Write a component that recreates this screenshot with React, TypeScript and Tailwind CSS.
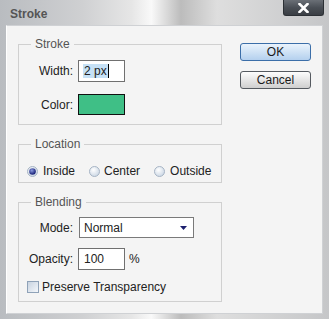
import React from "react";

const Radio = ({ checked }: { checked?: boolean }) => (
  <svg width="11" height="11" viewBox="0 0 11 11">
    <defs>
      <radialGradient id="rOff" cx="0.4" cy="0.35" r="0.7">
        <stop offset="0%" stopColor="#ffffff" />
        <stop offset="100%" stopColor="#c9d5e3" />
      </radialGradient>
      <radialGradient id="rOn" cx="0.4" cy="0.35" r="0.6">
        <stop offset="0%" stopColor="#8c9ce0" />
        <stop offset="100%" stopColor="#1a237a" />
      </radialGradient>
    </defs>
    <circle cx="5.5" cy="5.5" r="5" fill="url(#rOff)" stroke="#a7b4c4" strokeWidth="1" />
    {checked && <circle cx="5.5" cy="5.5" r="3.3" fill="url(#rOn)" />}
  </svg>
);

const Legend = ({ children }: { children: React.ReactNode }) => (
  <legend className="ml-[12px] px-[4px] leading-[14px] text-[#555]">{children}</legend>
);

export default function App() {
  return (
    <div className="w-[329px] h-[319px] flex flex-col font-['Liberation_Sans',Arial,sans-serif] text-[12px] text-[#222] bg-[linear-gradient(90deg,#b9bcc0_0%,#cfd0d2_25%,#e6e6e6_40%,#f9f9f9_46%,#bcbcbc_55%,#dedede_66%,#c5c6c8_100%)]">
      {/* title bar */}
      <div className="h-[25px] flex items-start justify-between">
        <div className="pl-[10px] pt-[6px] leading-[16px] font-bold text-[12px] text-[#555]">Stroke</div>
        <div className="mr-[5px] w-[41px] h-[16px] flex items-center justify-center rounded-b-[3px] border border-t-0 border-[#2c3035] bg-[linear-gradient(180deg,#6a6f76_0%,#4a4f56_50%,#3a3e44_100%)]">
          <svg width="11" height="10" viewBox="0 0 11 10">
            <path d="M1.5 1 L9.5 9 M9.5 1 L1.5 9" stroke="#ffffff" strokeWidth="2.6" strokeLinecap="square" />
          </svg>
        </div>
      </div>

      {/* client area */}
      <div className="ml-[6px] w-[317px] flex-1 mb-[5px] border border-[#cfd1d4] border-l-white bg-[#f4f4f4] flex items-start pt-[11px] pl-[11px]">
        <div className="w-[204px] flex flex-col gap-[12px]">
          <fieldset className="border border-[#d0d0d0] px-0 pb-[9px]">
            <Legend>Stroke</Legend>
            <div className="mt-[9px] flex items-center">
              <div className="w-[54px] text-right">Width:</div>
              <div className="ml-[5px] w-[47px] h-[22px] border border-[#707070] bg-white flex items-center pl-[4px]">
                <span className="bg-[#c6e1f6] px-[1px] leading-[14px]">2 px</span>
                <span className="w-px h-[14px] bg-black" />
              </div>
            </div>
            <div className="mt-[12px] flex items-center">
              <div className="w-[54px] text-right">Color:</div>
              <div className="ml-[5px] w-[47px] h-[21px] border border-[#111] bg-[#3fbf86]" />
            </div>
          </fieldset>

          <fieldset className="border border-[#d0d0d0] px-0 pb-[4px]">
            <Legend>Location</Legend>
            <div className="mt-[13px] pl-[8px] flex items-center gap-[14px] leading-[14px]">
              <label className="flex items-center gap-[5px]">
                <Radio checked />
                <span>Inside</span>
              </label>
              <label className="flex items-center gap-[4px]">
                <Radio />
                <span>Center</span>
              </label>
              <label className="flex items-center gap-[5px]">
                <Radio />
                <span>Outside</span>
              </label>
            </div>
          </fieldset>

          <fieldset className="border border-[#d0d0d0] px-0 pb-[7px]">
            <Legend>Blending</Legend>
            <div className="mt-[8px] flex items-center">
              <div className="w-[54px] text-right">Mode:</div>
              <div className="ml-[6px] w-[115px] h-[21px] border border-[#7a7a7a] bg-white flex items-center justify-between pl-[4px] pr-[6px]">
                <span>Normal</span>
                <svg width="7" height="4" viewBox="0 0 7 4">
                  <path d="M0 0 H7 L3.5 4 Z" fill="#1c1f6e" />
                </svg>
              </div>
            </div>
            <div className="mt-[10px] flex items-center">
              <div className="w-[54px] text-right">Opacity:</div>
              <div className="ml-[5px] w-[47px] h-[22px] border border-[#707070] bg-white flex items-center pl-[5px]">
                100
              </div>
              <span className="ml-[4px]">%</span>
            </div>
            <div className="mt-[10px] pl-[8px] flex items-center leading-[14px]">
              <div className="w-[12px] h-[12px] border border-[#8fa2b8] bg-[linear-gradient(135deg,#c8d3e0_0%,#f4f7fb_100%)]" />
              <span className="ml-[3px]">Preserve Transparency</span>
            </div>
          </fieldset>
        </div>

        <div className="ml-[18px] mt-[6px] flex flex-col gap-[10px]">
          <button className="w-[71px] h-[18px] rounded-[3px] border border-[#3b6ea8] bg-[linear-gradient(180deg,#eaf3fc_0%,#cfe2f5_50%,#b4d0ee_100%)] leading-[14px] text-[#1a1a1a]">
            OK
          </button>
          <button className="w-[71px] h-[18px] rounded-[3px] border border-[#555a60] bg-[linear-gradient(180deg,#fdfdfd_0%,#e6e6e6_50%,#cfcfcf_100%)] leading-[14px] text-[#1a1a1a]">
            Cancel
          </button>
        </div>
      </div>
    </div>
  );
}
